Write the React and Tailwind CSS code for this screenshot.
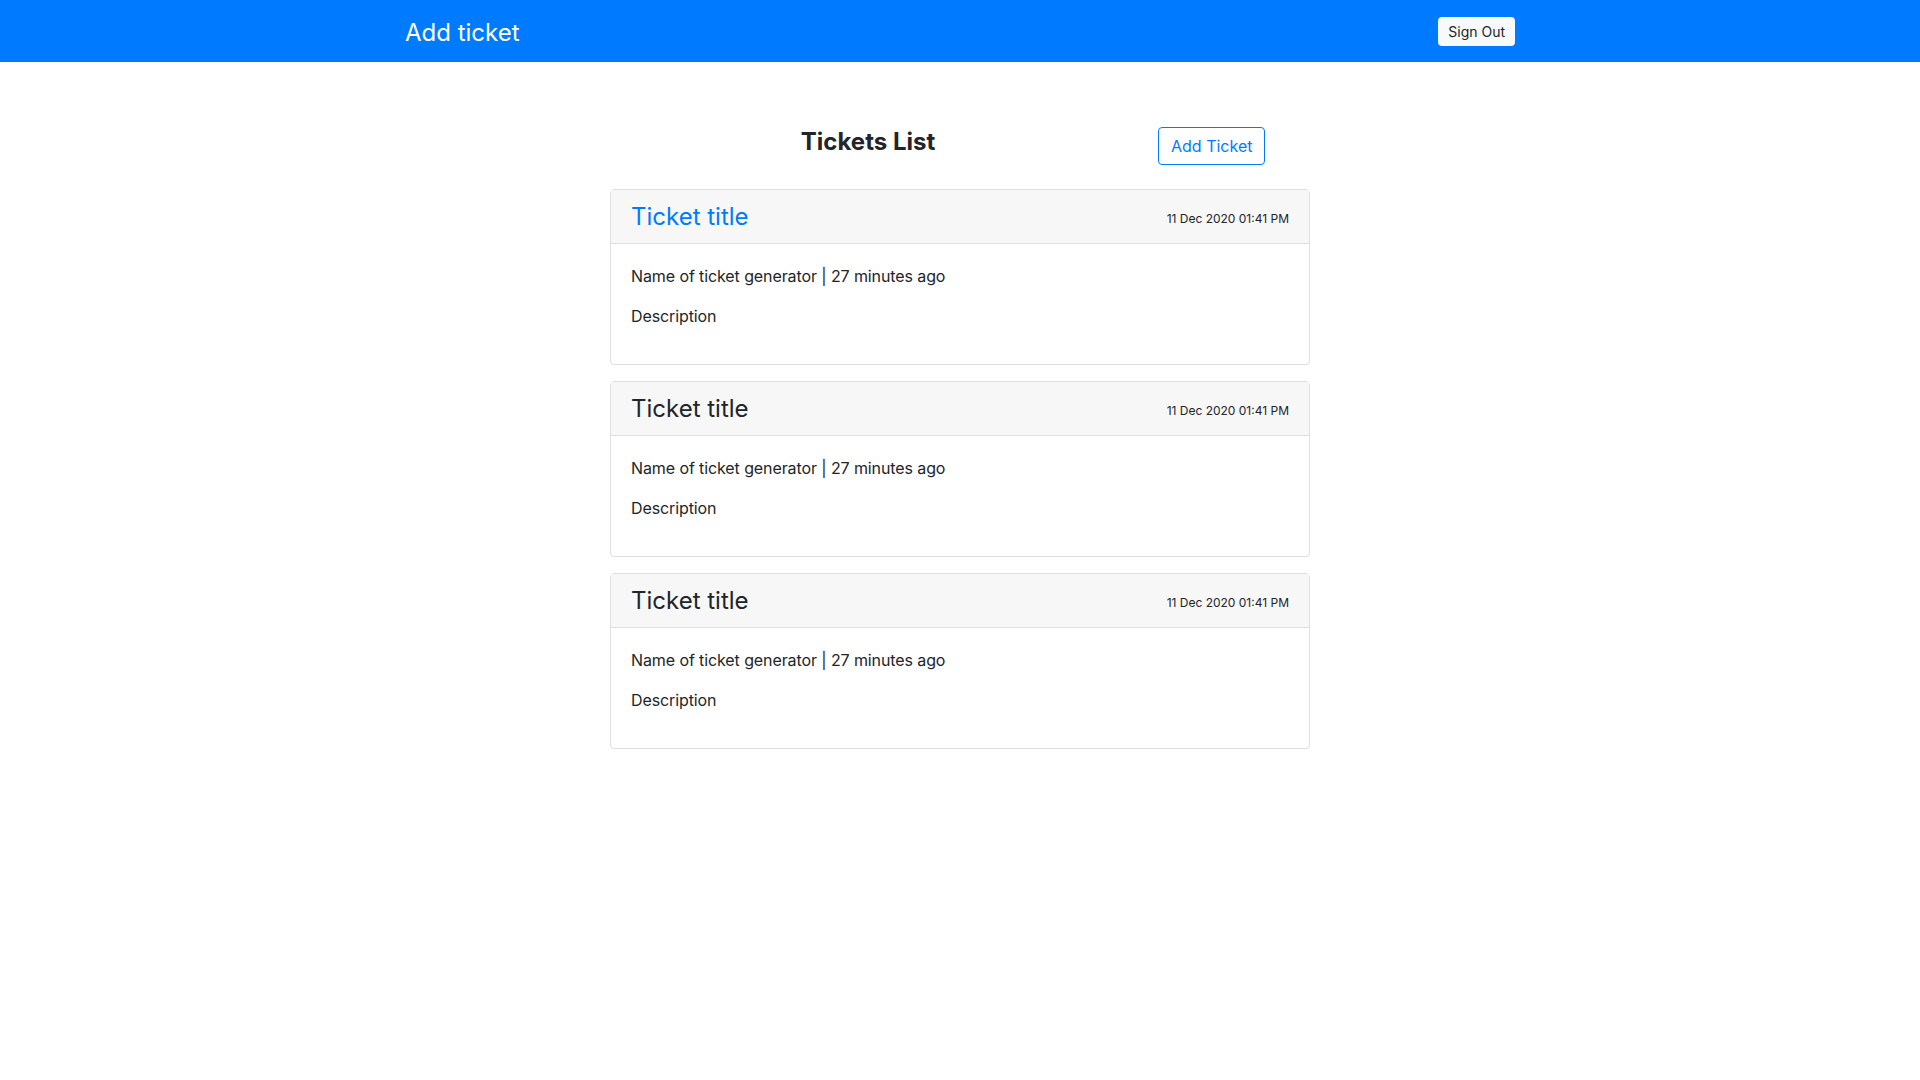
import React from "react";

const tickets = [
  { title: "Ticket title", active: true },
  { title: "Ticket title", active: false },
  { title: "Ticket title", active: false },
];

function TicketCard({ title, active }) {
  return (
    <div className="mb-4 rounded border border-[#dfdfdf] bg-white">
      <div className="flex items-center justify-between border-b border-[#dfdfdf] bg-[#f7f7f7] px-5 py-3">
        <h4 className={`pt-px text-[24px] leading-[28px] ${active ? "text-[#007bff]" : "text-[#212529]"}`}>
          {title}
        </h4>
        <small className="mt-1 text-[12px] text-[#212529]">11 Dec 2020 01:41 PM</small>
      </div>
      <div className="px-5 pt-5 pb-5 text-[16px] leading-6 tracking-[-0.1px] text-[#212529]">
        <p className="mb-4">Name of ticket generator | 27 minutes ago</p>
        <p className="mb-4">Description</p>
      </div>
    </div>
  );
}

export default function App() {
  return (
    <div className="min-h-screen bg-white font-['Inter',sans-serif] text-[#212529]">
      {/* Navbar */}
      <nav className="h-[62px] bg-[#007bff]">
        <div className="mx-auto flex h-full w-[1110px] items-center justify-between">
          <span className="pt-[3px] text-[24px] text-white">Add ticket</span>
          <button className="rounded bg-[#f8f9fa] px-[10px] py-[4px] text-[14px] leading-[21px] text-[#212529]">
            Sign Out
          </button>
        </div>
      </nav>

      <div className="mx-auto w-[700px] pt-[61px]">
        {/* Header row */}
        <div className="mb-[24px] flex items-start">
          <h3 className="mt-[4px] w-[516px] text-center text-[24px] font-bold leading-[29px]">Tickets List</h3>
          <button className="ml-8 mt-[4px] rounded border border-[#007bff] px-3 py-[6px] text-[16px] leading-6 text-[#007bff]">
            Add Ticket
          </button>
        </div>

        {tickets.map((t, i) => (
          <TicketCard key={i} {...t} />
        ))}
      </div>
    </div>
  );
}
